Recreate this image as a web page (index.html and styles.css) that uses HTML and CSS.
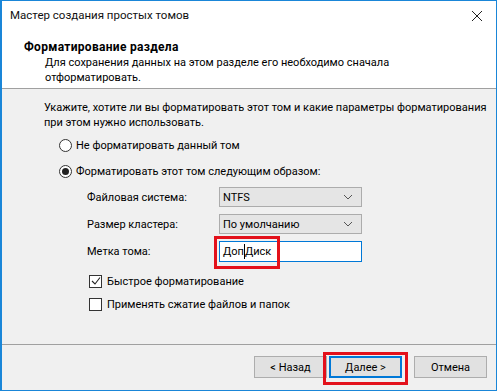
FILE: index.html
```html
<!DOCTYPE html>
<html lang="ru">
<head>
<meta charset="utf-8">
<title>Мастер создания простых томов</title>
<link rel="stylesheet" href="styles.css">
</head>
<body>
<div class="window">
  <div class="titlebar">
    <span class="title">Мастер создания простых томов</span>
    <svg class="close" width="12" height="12" viewBox="0 0 12 12"><path d="M1 1 L11 11 M11 1 L1 11" stroke="#222" stroke-width="1" fill="none"/></svg>
  </div>
  <div class="header">
    <div class="heading">Форматирование раздела</div>
    <div class="subtitle">Для сохранения данных на этом разделе его необходимо сначала<br>отформатировать.</div>
  </div>
  <div class="content">
    <p class="intro">Укажите, хотите ли вы форматировать этот том и какие параметры форматирования<br>при этом нужно использовать.</p>
    <div class="radio-row first"><span class="radio"></span><span>Не форматировать данный том</span></div>
    <div class="radio-row"><span class="radio checked"></span><span>Форматировать этот том следующим образом:</span></div>
    <div class="fields">
      <span class="flabel">Файловая система:</span>
      <div class="select"><span>NTFS</span><svg width="10" height="6" viewBox="0 0 10 6"><path d="M1 1 L5 5 L9 1" stroke="#555" fill="none"/></svg></div>
      <span class="flabel">Размер кластера:</span>
      <div class="select"><span>По умолчанию</span><svg width="10" height="6" viewBox="0 0 10 6"><path d="M1 1 L5 5 L9 1" stroke="#555" fill="none"/></svg></div>
      <span class="flabel">Метка тома:</span>
      <div class="input"><span>Доп</span><span class="caret"></span><span>Диск</span></div>
    </div>
    <div class="check-row first"><span class="checkbox"><svg width="10" height="10" viewBox="0 0 10 10"><path d="M1 5 L4 8 L9 1.5" stroke="#222" stroke-width="1.1" fill="none"/></svg></span><span>Быстрое форматирование</span></div>
    <div class="check-row"><span class="checkbox"></span><span>Применять сжатие файлов и папок</span></div>
  </div>
  <div class="footer">
    <button class="btn back">&lt; Назад</button>
    <button class="btn next">Далее &gt;</button>
    <button class="btn cancel">Отмена</button>
  </div>
  <div class="mark mark-input"></div>
  <div class="mark mark-next"></div>
</div>
</body>
</html>
```

FILE: styles.css
```css
* { box-sizing: border-box; }
html, body { margin: 0; padding: 0; background: #fff; }
body {
  font-family: Roboto, "Noto Sans", sans-serif;
  font-size: 11px;
  color: #000;
}
.window {
  position: relative;
  width: 497px;
  height: 391px;
  border: 1px solid #1a86d8;
  border-left-width: 2px;
  display: flex;
  flex-direction: column;
  background: #f0f0f0;
  white-space: nowrap;
}
.titlebar {
  height: 29px;
  background: #fff;
  display: flex;
  align-items: center;
  justify-content: space-between;
  padding: 0 13px 0 8px;
}
.title { line-height: 15px; font-size: 11.5px; color: #111; }
.close { display: block; }
.header {
  background: #fff;
  height: 59px;
  padding: 10px 0 0 22px;
  border-bottom: 1px solid #a0a0a0;
  line-height: 15px;
}
.heading { font-weight: bold; font-size: 12px; letter-spacing: 0.3px; }
.subtitle { padding-left: 21px; }
.content {
  flex: 1;
  padding: 11px 0 0 42px;
  line-height: 15px;
}
.intro { margin: 0; }
.radio-row {
  display: flex;
  align-items: center;
  gap: 4px;
  height: 16px;
  margin-top: 10px;
  padding-left: 15px;
}
.radio-row.first { margin-top: 7px; }
.radio {
  width: 13px;
  height: 13px;
  border: 1px solid #333;
  border-radius: 50%;
  background: #fff;
  display: flex;
  align-items: center;
  justify-content: center;
}
.radio.checked::after {
  content: "";
  width: 7px;
  height: 7px;
  border-radius: 50%;
  background: #222;
}
.fields {
  display: grid;
  grid-template-columns: 132px 143px;
  row-gap: 7px;
  align-items: center;
  margin-top: 8px;
  padding-left: 43px;
}
.select {
  height: 20px;
  background: #e5e5e5;
  border: 1px solid #acacac;
  display: flex;
  align-items: center;
  justify-content: space-between;
  padding: 0 8px 0 3px;
}
.input {
  height: 21px;
  background: #fff;
  border: 1px solid #0078d7;
  display: flex;
  align-items: center;
  padding-left: 3px;
}
.caret {
  width: 1px;
  height: 15px;
  background: #000;
}
.check-row {
  display: flex;
  align-items: center;
  gap: 5px;
  height: 14px;
  margin-top: 9px;
  padding-left: 45px;
}
.check-row.first { margin-top: 12px; }
.checkbox {
  width: 13px;
  height: 13px;
  border: 1px solid #333;
  background: #fff;
  display: flex;
  align-items: center;
  justify-content: center;
}
.checkbox svg { display: block; }
.footer {
  height: 46px;
  border-top: 1px solid #a0a0a0;
  display: flex;
  align-items: center;
  padding: 0 0 1px 252px;
}
.btn {
  font: inherit;
  height: 22px;
  width: 73px;
  background: #e1e1e1;
  border: 1px solid #adadad;
  color: #000;
  padding: 0;
}
.next {
  margin-left: 2px;
  border: 2px solid #0078d7;
}
.cancel { margin-left: 12px; }
.mark {
  position: absolute;
  border: 3px solid #e3111b;
}
.mark-input { left: 212px; top: 235px; width: 66px; height: 33px; }
.mark-next { left: 321px; top: 351px; width: 85px; height: 33px; }
```
